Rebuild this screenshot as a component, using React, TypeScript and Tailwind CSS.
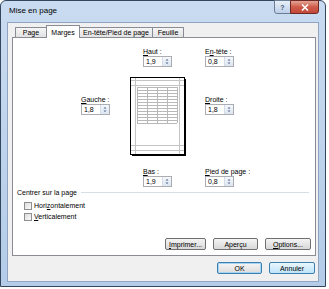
import React from "react";

function Spin({ value }: { value: string }) {
  return (
    <div className="flex h-[11px] w-[29px] border border-[#abadb3] bg-white">
      <div className="flex-1 pl-[2px] text-[7px] leading-[9px] text-black">{value}</div>
      <div className="w-[9px] border-l border-[#d3dbe6] bg-gradient-to-b from-[#f4f8fc] to-[#dde6f1]">
        <svg width="8" height="9" viewBox="0 0 8 9">
          <path d="M2.5 3.5 L4 2 L5.5 3.5 Z" fill="#4d6185" />
          <path d="M2.5 5.5 L4 7 L5.5 5.5 Z" fill="#4d6185" />
        </svg>
      </div>
    </div>
  );
}

function Field({ label, value }: { label: React.ReactNode; value: string }) {
  return (
    <div className="flex flex-col">
      <div className="h-[9px] text-[7px] leading-[9px] text-black whitespace-nowrap">{label}</div>
      <Spin value={value} />
    </div>
  );
}

function Btn({ children, w, variant }: { children: React.ReactNode; w: string; variant?: "def" | "hot" }) {
  const base = "flex h-[12px] items-center justify-center rounded-[2px] border text-[7px] leading-none text-black";
  if (variant === "def")
    return (
      <div className={`${base} ${w} border-[#3c7fb1] bg-gradient-to-b from-[#f6f6f6] to-[#dcdcdc] shadow-[inset_0_0_0_1px_#a6d4f2]`}>
        {children}
      </div>
    );
  if (variant === "hot")
    return (
      <div className={`${base} ${w} border-[#3c7fb1] bg-gradient-to-b from-[#eaf6fd] to-[#bde4fa]`}>{children}</div>
    );
  return (
    <div className={`${base} ${w} border-[#707070] bg-gradient-to-b from-[#f4f4f4] to-[#d8d8d8]`}>{children}</div>
  );
}

function Check({ children }: { children: React.ReactNode }) {
  return (
    <div className="flex h-[11px] items-center gap-[2px]">
      <div className="h-[8px] w-[8px] border border-[#8e8f8f] bg-gradient-to-br from-[#dcdcdc] to-[#fbfbfb]" />
      <span className="text-[7px] leading-none text-black">{children}</span>
    </div>
  );
}

function Preview() {
  const rows = Array.from({ length: 13 }, (_, i) => 10 + i * 3);
  const cols = [7, 17, 27, 37, 47];
  return (
    <svg width="57" height="80" viewBox="0 0 57 80">
      <rect x="2" y="2" width="54" height="77" fill="#000" />
      <rect x="0.5" y="0.5" width="54" height="77" fill="#fff" stroke="#000" />
      <line x1="5.5" y1="1" x2="5.5" y2="77" stroke="#c4c4c4" />
      <line x1="49.5" y1="1" x2="49.5" y2="77" stroke="#c4c4c4" />
      <line x1="1" y1="3.5" x2="54" y2="3.5" stroke="#c4c4c4" />
      <line x1="1" y1="8.5" x2="54" y2="8.5" stroke="#c4c4c4" />
      <line x1="1" y1="68.5" x2="54" y2="68.5" stroke="#c4c4c4" />
      <line x1="1" y1="73.5" x2="54" y2="73.5" stroke="#c4c4c4" />
      {rows.map((y) => (
        <line key={y} x1="7" y1={y + 0.5} x2="47" y2={y + 0.5} stroke="#b8b8b8" />
      ))}
      {cols.map((x) => (
        <line key={x} x1={x + 0.5} y1="10" x2={x + 0.5} y2="46" stroke="#b8b8b8" />
      ))}
    </svg>
  );
}

function Tab({ children, w, active }: { children: React.ReactNode; w: string; active?: boolean }) {
  if (active)
    return (
      <div className={`relative z-10 -mb-px -ml-px flex h-[13px] ${w} items-center justify-center border border-b-0 border-[#898c95] bg-white text-[7px] leading-none text-black`}>
        {children}
      </div>
    );
  return (
    <div className={`-ml-px flex h-[10px] ${w} items-center justify-center rounded-t-[1px] border border-b-0 border-[#898c95] bg-gradient-to-b from-[#f6f6f6] to-[#e2e2e2] text-[7px] leading-none text-black`}>
      {children}
    </div>
  );
}

export default function App() {
  return (
    <div className="h-[289px] w-[329px] bg-white font-['Liberation_Sans',Arial,sans-serif]">
      <div className="flex h-[287px] w-[326px] flex-col rounded-t-[6px] border border-[#33465e] bg-gradient-to-b from-[#c9dbf0] to-[#b4cce8] px-[6px] pb-[4px]">
        {/* title bar */}
        <div className="flex h-[21px] items-start justify-between">
          <div className="pl-[2px] pt-[5px] text-[8px] leading-[10px] text-black">Mise en page</div>
          <div className="-mt-px flex">
            <div className="flex h-[14px] w-[17px] items-center justify-center rounded-bl-[3px] border border-[#6b7d94] bg-gradient-to-b from-[#e9f0f9] to-[#bccfe8] text-[7px] font-bold leading-none text-[#4a5a70]">
              ?
            </div>
            <div className="-ml-px flex h-[14px] w-[29px] items-center justify-center rounded-br-[3px] border border-[#6e2a22] bg-gradient-to-b from-[#e3a597] via-[#cf5a48] to-[#c2493a]">
              <svg width="8" height="7" viewBox="0 0 8 7">
                <path d="M1 0.5 L7 6.5 M7 0.5 L1 6.5" stroke="#fff" strokeWidth="1.6" />
              </svg>
            </div>
          </div>
        </div>
        {/* client area */}
        <div className="flex flex-1 flex-col border border-[#8ea4c0] bg-[#f0f0f0] pl-[4px] pr-[2px] pt-[2px] pb-[7px]">
          <div className="flex h-[12px] items-end pl-[4px]">
            <Tab w="w-[32px]">Page</Tab>
            <Tab w="w-[34px]" active>
              Marges
            </Tab>
            <Tab w="w-[74px]">En-tête/Pied de page</Tab>
            <Tab w="w-[32px]">Feuille</Tab>
          </div>
          <div className="flex h-[219px] flex-col border border-[#898c95] bg-white">
            <div className="grid grid-cols-[68px_49px_57px_18px_1fr] pt-[9px]">
              <div className="col-start-3 row-start-1 pl-[13px]">
                <Field
                  value="1,9"
                  label={
                    <>
                      <span className="underline">H</span>aut :
                    </>
                  }
                />
              </div>
              <div className="col-start-5 row-start-1">
                <Field
                  value="0,8"
                  label={
                    <>
                      E<span className="underline">n</span>-tête :
                    </>
                  }
                />
              </div>
              <div className="col-start-2 row-start-2 pt-[28px]">
                <Field
                  value="1,8"
                  label={
                    <>
                      <span className="underline">G</span>auche :
                    </>
                  }
                />
              </div>
              <div className="col-start-3 row-start-2 pt-[10px]">
                <Preview />
              </div>
              <div className="col-start-5 row-start-2 pt-[28px]">
                <Field
                  value="1,8"
                  label={
                    <>
                      <span className="underline">D</span>roite :
                    </>
                  }
                />
              </div>
              <div className="col-start-3 row-start-3 pl-[13px] pt-[10px]">
                <Field
                  value="1,9"
                  label={
                    <>
                      <span className="underline">B</span>as :
                    </>
                  }
                />
              </div>
              <div className="col-start-5 row-start-3 pt-[10px]">
                <Field
                  value="0,8"
                  label={
                    <>
                      <span className="underline">P</span>ied de page :
                    </>
                  }
                />
              </div>
            </div>
            <div className="mt-px flex items-center pl-[4px] pr-[6px]">
              <span className="text-[7px] leading-[9px] text-black">Centrer sur la page</span>
              <div className="ml-[4px] h-px flex-1 bg-[#d5dfe5]" />
            </div>
            <div className="mt-[3px] flex flex-col pl-[11px]">
              <Check>
                Hori<span className="underline">z</span>ontalement
              </Check>
              <Check>
                <span className="underline">V</span>erticalement
              </Check>
            </div>
            <div className="mt-auto flex justify-end gap-[7px] pb-[5px] pr-[4px]">
              <Btn w="w-[41px]">
                <span className="underline">I</span>mprimer...
              </Btn>
              <Btn w="w-[45px]">Aperçu</Btn>
              <Btn w="w-[46px]">
                <span className="underline">O</span>ptions...
              </Btn>
            </div>
          </div>
          <div className="mt-[6px] flex justify-end gap-[7px] pr-px">
            <Btn w="w-[45px]" variant="def">
              OK
            </Btn>
            <Btn w="w-[46px]" variant="hot">
              Annuler
            </Btn>
          </div>
        </div>
      </div>
    </div>
  );
}
